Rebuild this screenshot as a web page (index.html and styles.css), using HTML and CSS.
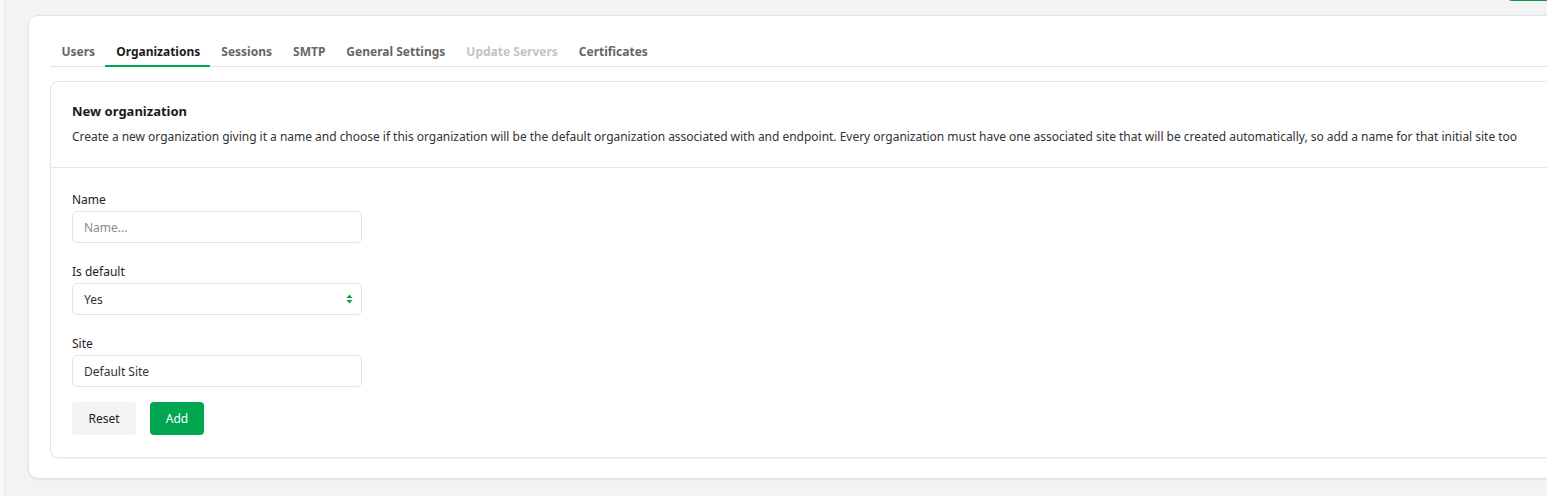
FILE: index.html
```html
<!DOCTYPE html>
<html lang="en">
<head>
<meta charset="utf-8">
<title>Organizations</title>
<link rel="stylesheet" href="styles.css">
</head>
<body>
<div class="page">
  <div class="side-edge"></div>
  <main class="main">
    <div class="top-action"></div>
    <section class="outer-card">
      <nav class="tabs">
        <span class="tab">Users</span>
        <span class="tab active">Organizations</span>
        <span class="tab">Sessions</span>
        <span class="tab">SMTP</span>
        <span class="tab">General Settings</span>
        <span class="tab disabled">Update Servers</span>
        <span class="tab">Certificates</span>
      </nav>
      <div class="inner-card">
        <header class="card-head">
          <h2 class="card-title">New organization</h2>
          <p class="card-desc">Create a new organization giving it a name and choose if this organization will be the default organization associated with and endpoint. Every organization must have one associated site that will be created automatically, so add a name for that initial site too</p>
        </header>
        <form class="card-body">
          <div class="field">
            <label class="label">Name</label>
            <input class="input" type="text" placeholder="Name...">
          </div>
          <div class="field">
            <label class="label">Is default</label>
            <div class="select">
              <span>Yes</span>
              <svg class="sel-arrow" width="7" height="10" viewBox="0 0 7 10"><path d="M3.5 0.5 L6.5 4 L0.5 4 Z M3.5 9.5 L6.5 6 L0.5 6 Z" fill="#0aa24f"/></svg>
            </div>
          </div>
          <div class="field">
            <label class="label">Site</label>
            <input class="input filled" type="text" value="Default Site">
          </div>
          <div class="actions">
            <button type="button" class="btn btn-reset">Reset</button>
            <button type="button" class="btn btn-add">Add</button>
          </div>
        </form>
      </div>
    </section>
  </main>
</div>
</body>
</html>
```
FILE: styles.css
```css
* { box-sizing: border-box; }
html, body { margin: 0; padding: 0; }
body {
  background: #f3f3f3;
  font-family: "Noto Sans", "Open Sans", sans-serif;
  color: #222;
  overflow: hidden;
  width: 1547px;
  height: 496px;
}
.page {
  display: flex;
  height: 496px;
}
.side-edge {
  width: 5px;
  flex: none;
  background: #f8f8f8;
  border-right: 1px solid #e6e6e6;
}
.main {
  position: relative;
  flex: none;
  padding: 15px 0 0 23px;
}
.top-action {
  position: absolute;
  top: -31px;
  left: 1503px;
  width: 60px;
  height: 32px;
  background: #0b9c4a;
  border-radius: 4px;
}
.outer-card {
  width: 1560px;
  height: 464px;
  background: #fff;
  border: 1px solid #e2e2e2;
  border-radius: 10px;
  box-shadow: 0 1px 2px rgba(0,0,0,0.06);
  padding: 21px 0 20px 21px;
}
.tabs {
  display: flex;
  border-bottom: 1px solid #e3e3e3;
  height: 30px;
  padding-left: 0.5px;
}
.tab {
  padding: 6px 10px 0 11px;
  font-size: 12px;
  font-weight: 700;
  color: #666;
  height: 30px;
  line-height: 17px;
}
.tab.active {
  color: #1c1c1c;
  border-bottom: 2px solid #00a650;
}
.tab.disabled { color: #c3c3c3; }
.inner-card {
  margin-top: 14px;
  background: #fff;
  border: 1px solid #e4e4e4;
  border-radius: 8px;
  box-shadow: 0 1px 2px rgba(0,0,0,0.05);
  height: 377px;
}
.card-head {
  padding: 19px 21px 20px 21px;
  border-bottom: 1px solid #e6e6e6;
}
.card-title {
  margin: 0;
  font-size: 13px;
  font-weight: 700;
  color: #1a1a1a;
  line-height: 20px;
}
.card-desc {
  margin: 6px 0 0 0;
  font-size: 12px;
  line-height: 20px;
  color: #333;
  white-space: nowrap;
  letter-spacing: -0.02px;
}
.card-body {
  padding: 23px 21px 0 21px;
}
.field {
  display: flex;
  flex-direction: column;
  margin-bottom: 20px;
}
.field:nth-child(3) { margin-bottom: 15px; }
.label {
  font-size: 12px;
  line-height: 18px;
  color: #222;
  margin-bottom: 2px;
}
.input, .select {
  width: 290px;
  height: 32px;
  border: 1px solid #e2e2e2;
  border-radius: 5px;
  padding: 0 11px;
  font-family: inherit;
  font-size: 12px;
  color: #333;
  background: #fff;
  outline: none;
}
.input::placeholder { color: #8a8a8a; }
.select {
  display: flex;
  align-items: center;
  justify-content: space-between;
  padding-right: 8px;
}
.actions {
  display: flex;
  gap: 14px;
}
.btn {
  height: 33px;
  border: none;
  border-radius: 4px;
  font-family: inherit;
  font-size: 12px;
  padding: 0;
}
.btn-reset {
  width: 64px;
  background: #f3f3f3;
  color: #222;
}
.btn-add {
  width: 54px;
  background: #00a650;
  color: #fff;
}
```
